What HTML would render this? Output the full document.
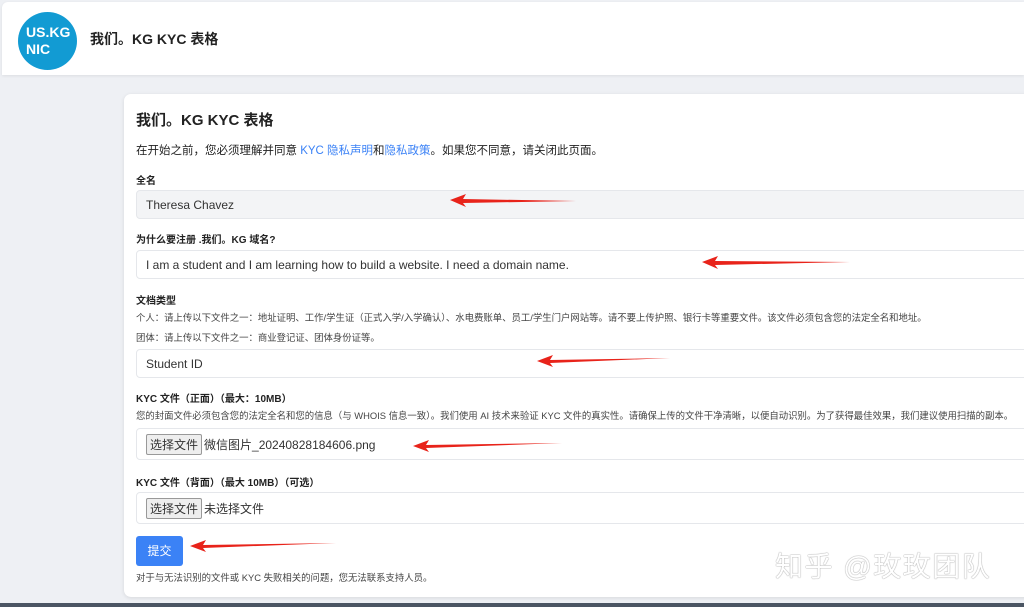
<!DOCTYPE html>
<html><head><meta charset="utf-8"><style>
*{box-sizing:border-box;margin:0;padding:0}
body{width:1024px;height:607px;overflow:hidden;background:#eef0f4;font-family:"Liberation Sans","Noto Sans CJK SC",sans-serif;color:#222;position:relative}
.hdr{position:absolute;left:2px;top:2px;width:1022px;height:73px;background:#fff;border-radius:6px 0 0 0;box-shadow:0 1px 3px rgba(0,0,0,.08)}
.logo{position:absolute;left:16px;top:10px;width:59px;height:58px;border-radius:50%;background:#129bd3;color:#fff;font-weight:bold;font-size:14px;line-height:17px;padding:12px 0 0 8px}
.ht{position:absolute;left:88px;top:27px;font-size:14px;font-weight:bold}
.card{position:absolute;left:124px;top:94px;width:910px;height:503px;background:#fff;border-radius:7px;box-shadow:0 1px 4px rgba(0,0,0,.1)}
.a{position:absolute;white-space:nowrap}
.t{left:136px;top:109px;font-size:15px;font-weight:bold}
.p{font-size:11.5px;color:#222}
.lab{font-size:10px;font-weight:bold;color:#222}
.s{font-size:9.4px;color:#444}
.in{position:absolute;left:136px;width:900px;height:29px;border:1px solid #e5e7eb;border-radius:4px;background:#fff;font-size:12px;padding:7px 9px;color:#333}
.btnf{display:inline-block;border:1px solid #999;background:#eee;font-size:12px;padding:1px 3px;margin:-3px 2px 0 0;border-radius:2px}
.sub{position:absolute;left:136px;top:536px;width:47px;height:30px;background:#3b82f6;color:#fff;font-size:12px;border-radius:3px;text-align:center;line-height:30px}
.bot{position:absolute;left:0;top:603px;width:1024px;height:4px;background:#4b5563}
.wm{left:775px;top:545px;font-size:28px;color:#fff;text-shadow:0 0 1px #999,0 0 1px #999;letter-spacing:1.5px}
</style></head><body>
<div class="hdr"><div class="logo">US.KG<br>NIC</div><div class="ht">我们。KG KYC 表格</div></div>
<div class="card"></div>
<div class="a t">我们。KG KYC 表格</div>
<div class="a p" style="left:136px;top:142px">在开始之前，您必须理解并同意 <span style="color:#3b82f6">KYC 隐私声明</span>和<span style="color:#3b82f6">隐私政策</span>。如果您不同意，请关闭此页面。</div>
<div class="a lab" style="left:136px;top:172px">全名</div>
<div class="in" style="top:190px;background:#f3f4f6">Theresa Chavez</div>
<div class="a lab" style="left:136px;top:231px">为什么要注册 .我们。KG 域名?</div>
<div class="in" style="top:250px">I am a student and I am learning how to build a website. I need a domain name.</div>
<div class="a lab" style="left:136px;top:292px">文档类型</div>
<div class="a s" style="left:136px;top:310px">个人：请上传以下文件之一：地址证明、工作/学生证（正式入学/入学确认）、水电费账单、员工/学生门户网站等。请不要上传护照、银行卡等重要文件。该文件必须包含您的法定全名和地址。</div>
<div class="a s" style="left:136px;top:330px">团体：请上传以下文件之一：商业登记证、团体身份证等。</div>
<div class="in" style="top:349px">Student ID</div>
<div class="a lab" style="left:136px;top:390px">KYC 文件（正面）（最大：10MB）</div>
<div class="a s" style="left:136px;top:408px">您的封面文件必须包含您的法定全名和您的信息（与 WHOIS 信息一致）。我们使用 AI 技术来验证 KYC 文件的真实性。请确保上传的文件干净清晰，以便自动识别。为了获得最佳效果，我们建议使用扫描的副本。</div>
<div class="in" style="top:428px;height:32px;padding:7px 9px"><span class="btnf">选择文件</span>微信图片_20240828184606.png</div>
<div class="a lab" style="left:136px;top:474px">KYC 文件（背面）（最大 10MB）（可选）</div>
<div class="in" style="top:492px;height:32px;padding:7px 9px"><span class="btnf">选择文件</span>未选择文件</div>
<div class="sub">提交</div>
<div class="a s" style="left:136px;top:570px">对于与无法识别的文件或 KYC 失败相关的问题，您无法联系支持人员。</div>
<div class="a wm">知乎 @玫玫团队</div>
<svg class="a" style="left:0;top:0" width="1024" height="607">
<g fill="#e8231a">
<polygon points="450,200 466,194 463,199 576,201 463,203 466,207"/>
<polygon points="702,262 718,256 715,261 850,262 715,265 718,269"/>
<polygon points="537,361 553,355 550,360 670,358 550,363 553,367"/>
<polygon points="413,446 429,440 426,445 562,443 426,448 429,452"/>
<polygon points="190,546 206,540 203,545 336,543 203,548 206,552"/>
</g></svg>
<div class="bot"></div>
</body></html>
